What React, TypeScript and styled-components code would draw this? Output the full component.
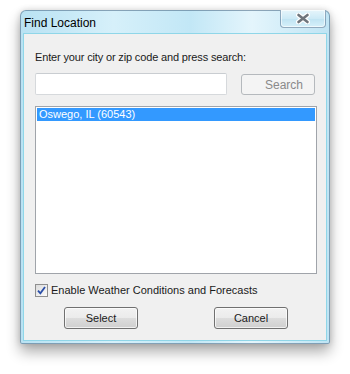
import React, { useState } from "react";
import styled, { createGlobalStyle } from "styled-components";

const GlobalStyle = createGlobalStyle`
  html, body {
    margin: 0;
    padding: 0;
    background: #ffffff;
  }
  body {
    font-family: "Liberation Sans", Arial, sans-serif;
  }
`;

const App = () => {
  const [enabled, setEnabled] = useState(true);
  const [query, setQuery] = useState("");

  return (
    <>
      <GlobalStyle />
      <Page>
        <Window>
          <TitleBar>
            <Title>Find Location</Title>
            <CloseButton>
              <svg width="14" height="11" viewBox="0 0 14 11">
                <path
                  d="M2.5 2 L11.5 9 M11.5 2 L2.5 9"
                  stroke="#ffffff"
                  strokeWidth="5"
                  strokeLinecap="round"
                />
                <path
                  d="M2.5 2 L11.5 9 M11.5 2 L2.5 9"
                  stroke="#6f757c"
                  strokeWidth="2.6"
                  strokeLinecap="round"
                />
              </svg>
            </CloseButton>
          </TitleBar>
          <Client>
            <Label>Enter your city or zip code and press search:</Label>
            <SearchRow>
              <TextInput
                value={query}
                onChange={(e) => setQuery(e.target.value)}
              />
              <SearchButton disabled>Search</SearchButton>
            </SearchRow>
            <ListBox>
              <ListItem $selected>Oswego, IL (60543)</ListItem>
            </ListBox>
            <CheckRow onClick={() => setEnabled(!enabled)}>
              <CheckBox>
                {enabled && (
                  <svg width="9" height="9" viewBox="0 0 9 9">
                    <path
                      d="M1 4.6 L3.4 7.4 L8 1"
                      stroke="#2a4ea8"
                      strokeWidth="1.8"
                      fill="none"
                    />
                  </svg>
                )}
              </CheckBox>
              <CheckLabel>Enable Weather Conditions and Forecasts</CheckLabel>
            </CheckRow>
            <ButtonRow>
              <Button>Select</Button>
              <Button>Cancel</Button>
            </ButtonRow>
          </Client>
        </Window>
      </Page>
    </>
  );
};

export default App;

const Page = styled.div`
  width: 350px;
  height: 374px;
  padding: 10px 0 0 20px;
  box-sizing: border-box;
`;

const Window = styled.div`
  width: 310px;
  height: 334px;
  box-sizing: border-box;
  display: flex;
  flex-direction: column;
  border: 1px solid rgba(70, 100, 130, 0.55);
  border-radius: 6px 6px 2px 2px;
  background: linear-gradient(
    to right,
    #b9e2f3 0%,
    #d6f0fa 30%,
    #c2e7f6 55%,
    #e4f5fc 75%,
    #bfe4f4 100%
  );
  box-shadow: 0 8px 14px rgba(0, 0, 0, 0.32), 0 0 6px rgba(0, 0, 0, 0.15);
`;

const TitleBar = styled.div`
  height: 22px;
  display: flex;
  align-items: flex-start;
  justify-content: space-between;
  padding: 0 3px 0 3px;
`;

const Title = styled.div`
  font-size: 12px;
  line-height: 12px;
  color: #000;
  padding-top: 6px;
`;

const CloseButton = styled.div`
  width: 46px;
  height: 18px;
  box-sizing: border-box;
  margin-top: -1px;
  border: 1px solid rgba(90, 120, 150, 0.6);
  border-top: none;
  border-radius: 0 0 4px 4px;
  background: linear-gradient(#e6f5fb, #cdeaf6 50%, #bfe3f2 51%, #d6f0fa);
  box-shadow: inset 0 0 0 1px rgba(255, 255, 255, 0.6);
  display: flex;
  align-items: center;
  justify-content: center;
`;

const Client = styled.div`
  flex: 1;
  margin: 0 2px 2px 2px;
  background: #f0f0f0;
  border: 1px solid #8fd6e8;
  display: flex;
  flex-direction: column;
  padding: 0 11px 0 11px;
  font-size: 11px;
  color: #1a1a1a;
`;

const Label = styled.div`
  margin-top: 16px;
  line-height: 14px;
  height: 14px;
  letter-spacing: -0.15px;
`;

const SearchRow = styled.div`
  margin-top: 9px;
  display: flex;
  align-items: flex-start;
`;

const TextInput = styled.input`
  width: 193px;
  height: 22px;
  box-sizing: border-box;
  border: 1px solid #d6d9dc;
  border-top-color: #c9cdd1;
  border-radius: 2px;
  background: #fff;
  outline: none;
  padding: 0 3px;
  font: inherit;
`;

const SearchButton = styled.button`
  width: 74px;
  height: 21px;
  margin: 1px 0 0 14px;
  box-sizing: border-box;
  border: 1px solid #b5b9bd;
  border-radius: 3px;
  background: #f4f4f4;
  color: #8a8a8a;
  font: inherit;
  font-size: 12px;
  text-align: right;
  padding: 0 11px 0 0;
`;

const ListBox = styled.div`
  margin-top: 11px;
  width: 282px;
  height: 168px;
  box-sizing: border-box;
  border: 1px solid #a0a4aa;
  background: #fff;
  padding: 1px;
`;

const ListItem = styled.div<{ $selected?: boolean }>`
  height: 13px;
  line-height: 13px;
  padding-left: 2px;
  font-size: 11px;
  background: ${(p) => (p.$selected ? "#3399ff" : "transparent")};
  color: ${(p) => (p.$selected ? "#fff" : "#000")};
`;

const CheckRow = styled.div`
  margin-top: 9px;
  display: flex;
  align-items: center;
  gap: 3px;
  cursor: default;
`;

const CheckBox = styled.div`
  width: 13px;
  height: 13px;
  box-sizing: border-box;
  border: 1px solid #8f8f8f;
  background: linear-gradient(135deg, #dcdcdc, #fbfbfb);
  display: flex;
  align-items: center;
  justify-content: center;
`;

const CheckLabel = styled.span`
  font-size: 11px;
  line-height: 14px;
`;

const ButtonRow = styled.div`
  margin-top: 10px;
  padding-left: 29px;
  display: flex;
  gap: 76px;
`;

const Button = styled.button`
  width: 74px;
  height: 22px;
  box-sizing: border-box;
  border: 1px solid #707070;
  border-radius: 3px;
  background: linear-gradient(#f2f2f2 0%, #ebebeb 50%, #dddddd 51%, #cfcfcf 100%);
  box-shadow: inset 0 0 0 1px rgba(255, 255, 255, 0.7);
  font: inherit;
  font-size: 11px;
  color: #1a1a1a;
  padding: 0;
`;
